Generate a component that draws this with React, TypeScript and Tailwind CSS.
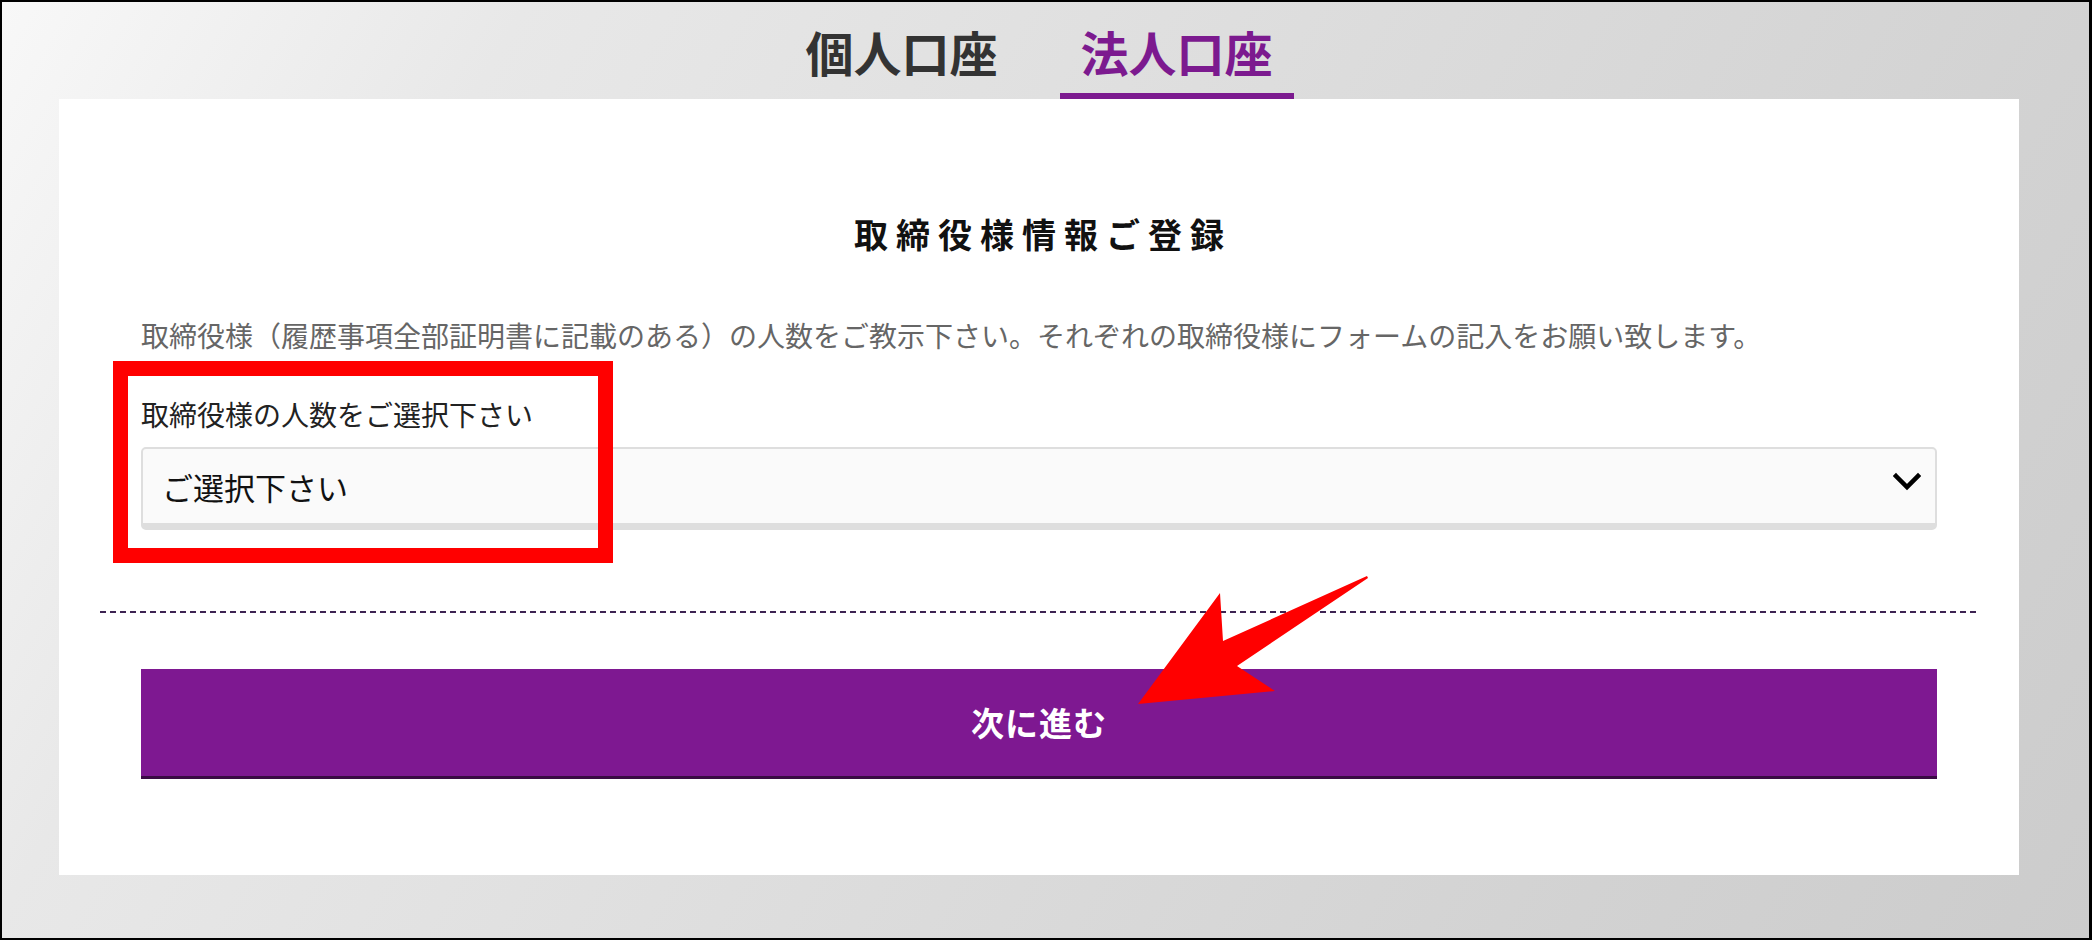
import React from "react";

export default function App() {
  return (
    <div className="relative w-[2092px] h-[940px] overflow-hidden font-['Noto_Sans_CJK_JP','Noto_Sans_CJK_SC',sans-serif]">
      <div className="h-full flex flex-col border-t-2 border-b-2 border-l-2 border-r-[3px] border-black bg-[linear-gradient(120deg,#f8f8f8_0%,#e8e8e8_20%,#d2d2d2_80%,#cccccc_100%)] pl-[57px] pr-[70px]">
        {/* Tabs */}
        <div className="flex justify-center gap-[41px] pt-[25px]">
          <div className="px-[21px] pb-[18px] border-b-[6px] border-transparent">
            <span className="block text-[48px] leading-none font-bold text-[#333333]">個人口座</span>
          </div>
          <div className="px-[21px] pb-[18px] border-b-[6px] border-[#7c1a8f]">
            <span className="block text-[48px] leading-none font-bold text-[#7c1a8f]">法人口座</span>
          </div>
        </div>

        {/* Card */}
        <div className="bg-white h-[776px] px-[82px] pt-[118px] flex flex-col">
          <h1 className="text-center pl-[8px] text-[34px] leading-none font-bold tracking-[8px] text-[#111111]">
            取締役様情報ご登録
          </h1>
          <p className="mt-[70px] text-[28px] leading-none text-[#666666] whitespace-nowrap">
            取締役様（履歴事項全部証明書に記載のある）の人数をご教示下さい。それぞれの取締役様にフォームの記入をお願い致します。
          </p>
          <div className="mt-[51px] text-[28px] leading-none text-[#222222]">取締役様の人数をご選択下さい</div>
          <div className="mt-[19px] h-[83px] flex items-center justify-between rounded-[5px] border-2 border-b-[7px] border-[#dedede] bg-[#fafafa] pl-[19px] pr-[14px]">
            <span className="text-[31px] leading-none text-[#111111]">ご選択下さい</span>
            <svg width="28" height="20" viewBox="0 0 28 20" className="mb-[8px]">
              <polyline points="3,4 14,15 25,4" fill="none" stroke="#000" strokeWidth="4.5" strokeLinecap="square" />
            </svg>
          </div>
          <div className="mt-[81px] -mx-[41px] h-[2px] bg-[repeating-linear-gradient(to_right,#3d2352_0px,#3d2352_6px,transparent_6px,transparent_10px)]" />
          <button className="mt-[56px] h-[110px] w-full flex items-center justify-center bg-[#7e1891] border-b-[3px] border-[#3a0a44] text-white text-[33px] leading-none font-bold tracking-[1px]">
            次に進む
          </button>
        </div>
      </div>

      {/* Red highlight box annotation */}
      <div className="absolute left-[113px] top-[361px] w-[500px] h-[202px] border-[15px] border-[#ff0000]" />

      {/* Red arrow annotation */}
      <svg className="absolute left-0 top-0 pointer-events-none" width="2092" height="940" viewBox="0 0 2092 940">
        <polygon
          points="1367,576 1223,641 1220,593 1138,704 1275,691 1237,666 1368,578"
          fill="#ff0000"
        />
      </svg>
    </div>
  );
}
